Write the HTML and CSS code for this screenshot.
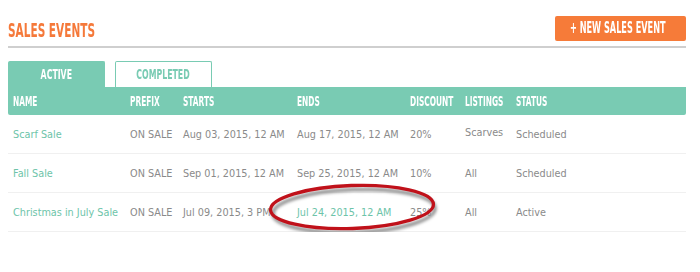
FILE: index.html
```html
<!DOCTYPE html>
<html lang="en">
<head>
    <meta charset="UTF-8">
    <title>Sales Events</title>
    <link rel="stylesheet" href="styles.css">
</head>
<body>
    <div class="page">
        <div class="top">
            <h1 class="title"><span>SALES EVENTS</span></h1>
            <button class="new-btn"><span>+ NEW SALES EVENT</span></button>
        </div>

        <ul class="tabs">
            <li class="tab active"><span>ACTIVE</span></li>
            <li class="tab"><span>COMPLETED</span></li>
        </ul>

        <div class="table">
            <div class="row head">
                <div class="c name"><span>NAME</span></div>
                <div class="c prefix"><span>PREFIX</span></div>
                <div class="c starts"><span>STARTS</span></div>
                <div class="c ends"><span>ENDS</span></div>
                <div class="c discount"><span>DISCOUNT</span></div>
                <div class="c listings"><span>LISTINGS</span></div>
                <div class="c status"><span>STATUS</span></div>
            </div>
            <div class="row">
                <div class="c name link">Scarf Sale</div>
                <div class="c prefix">ON SALE</div>
                <div class="c starts">Aug 03, 2015, 12 AM</div>
                <div class="c ends">Aug 17, 2015, 12 AM</div>
                <div class="c discount">20%</div>
                <div class="c listings up">Scarves</div>
                <div class="c status">Scheduled</div>
            </div>
            <div class="row">
                <div class="c name link">Fall Sale</div>
                <div class="c prefix">ON SALE</div>
                <div class="c starts">Sep 01, 2015, 12 AM</div>
                <div class="c ends">Sep 25, 2015, 12 AM</div>
                <div class="c discount">10%</div>
                <div class="c listings">All</div>
                <div class="c status">Scheduled</div>
            </div>
            <div class="row">
                <div class="c name link">Christmas in July Sale</div>
                <div class="c prefix">ON SALE</div>
                <div class="c starts">Jul 09, 2015, 3 PM</div>
                <div class="c ends link">Jul 24, 2015, 12 AM</div>
                <div class="c discount">25%</div>
                <div class="c listings">All</div>
                <div class="c status">Active</div>
            </div>
        </div>

        <!-- red marker drawn over the end date -->
        <svg class="mark" width="200" height="70" viewBox="0 0 200 70">
            <defs>
                <filter id="sh" x="-20%" y="-40%" width="140%" height="190%">
                    <feGaussianBlur stdDeviation="1.8"/>
                </filter>
            </defs>
            <ellipse cx="102" cy="43" rx="81" ry="21.5" transform="rotate(-2 102 43)" fill="none" stroke="#8f8f8f" stroke-width="3.5" filter="url(#sh)"/>
            <ellipse cx="100" cy="39" rx="81.5" ry="21.5" transform="rotate(-2 100 39)" fill="none" stroke="#c0111a" stroke-width="3.3"/>
        </svg>
    </div>
</body>
</html>
```

FILE: styles.css
```css
body {
    margin: 0;
    background: #fff;
}

.page {
    width: 678px;
    padding: 16px 14px 0 8px;
    position: relative;
    font-family: Verdana, "DejaVu Sans", sans-serif;
}

.top {
    display: flex;
    justify-content: space-between;
    align-items: flex-start;
    padding-bottom: 5px;
    border-bottom: 2px solid #cfcfcf;
}

.title {
    margin: 0;
    height: 25px;
    font-family: "Liberation Sans Narrow", "DejaVu Sans Condensed", sans-serif;
    font-weight: bold;
    font-size: 19.5px;
    line-height: 29px;
    color: #f5793a;
    white-space: nowrap;
}

.title span,
.new-btn span,
.tab span,
.head span {
    display: inline-block;
    transform-origin: left center;
}

.title span {
    transform: scaleX(.6);
}

.new-btn {
    width: 131px;
    height: 25px;
    padding: 0 0 0 15px;
    border: 0;
    border-radius: 2px;
    background: #f67b39;
    color: #fff;
    text-align: left;
    font-family: "Liberation Sans Narrow", "DejaVu Sans Condensed", sans-serif;
    font-weight: bold;
    font-size: 15.4px;
    line-height: 25px;
    white-space: nowrap;
    overflow: visible;
}

.new-btn span {
    transform: scaleX(.59);
}

.tabs {
    display: flex;
    gap: 10px;
    margin: 13px 0 0;
    padding: 0;
    list-style: none;
}

.tab {
    width: 97px;
    height: 26px;
    box-sizing: border-box;
    border: 1px solid #79cbb3;
    border-bottom: 0;
    border-radius: 2px 2px 0 0;
    color: #79cbb3;
    text-align: center;
    font-family: "Liberation Sans Narrow", "DejaVu Sans Condensed", sans-serif;
    font-weight: bold;
    font-size: 14px;
    line-height: 25px;
    white-space: nowrap;
}

.tab span {
    transform: scaleX(.62);
    transform-origin: center center;
}

.tab.active {
    background: #79cbb3;
    color: #fff;
}

.table {
    font-size: 9.7px;
    color: #8a8a8a;
}

.row {
    display: flex;
    align-items: center;
    height: 38px;
    padding-left: 5px;
    border-bottom: 1px solid #f0f0f0;
    white-space: nowrap;
}

.row.head {
    height: 28px;
    background: #79cbb3;
    border-bottom: 0;
    border-radius: 0 0 2px 2px;
    color: #fff;
    font-family: "Liberation Sans Narrow", "DejaVu Sans Condensed", sans-serif;
    font-weight: bold;
    font-size: 14px;
}

.head span {
    transform: scaleX(.59);
}

.c {
    flex: none;
}

.name { width: 117px; }
.prefix { width: 53px; }
.starts { width: 114px; }
.ends { width: 113px; }
.discount { width: 55px; }
.listings { width: 51px; }
.status { flex: 1; }

.link {
    color: #6dc4a9;
}

.up {
    margin-top: -3px;
}

.mark {
    position: absolute;
    left: 252px;
    top: 168px;
    overflow: visible;
}
```
